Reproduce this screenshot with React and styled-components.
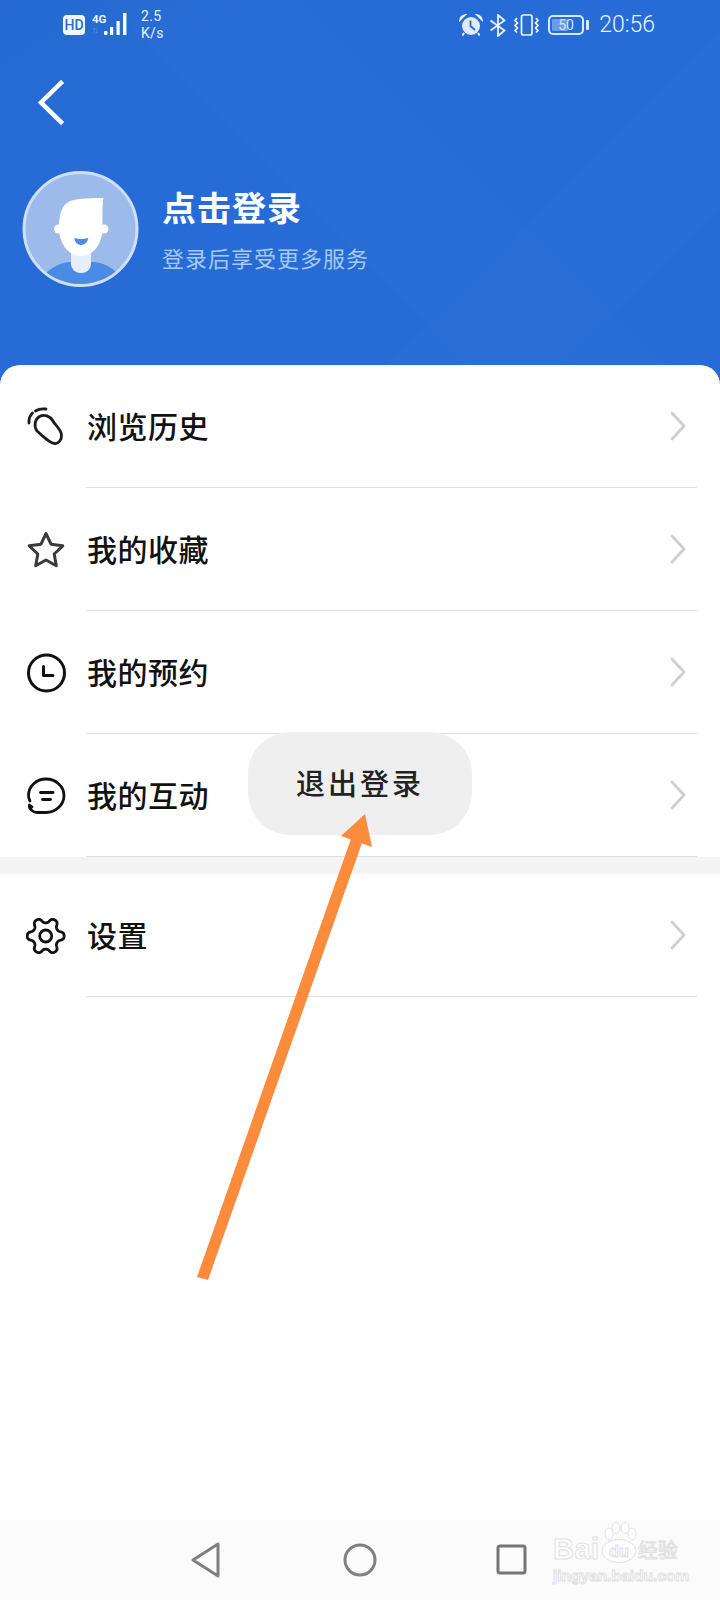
import styled, { createGlobalStyle } from "styled-components";

const GlobalStyle = createGlobalStyle`
  html, body {
    margin: 0;
    padding: 0;
    background: #fff;
  }
`;

const CJK = `"Noto Sans CJK SC", "Noto Sans", sans-serif`;

const menuTop = [
  { label: "浏览历史", icon: <HistoryIcon /> },
  { label: "我的收藏", icon: <StarIcon /> },
  { label: "我的预约", icon: <ClockIcon /> },
  { label: "我的互动", icon: <ChatIcon /> },
];

function gearPath() {
  const pts = [];
  for (let i = 0; i < 180; i++) {
    const a = (i / 180) * Math.PI * 2;
    const wave = Math.tanh(1.5 * Math.cos(6 * a)) / Math.tanh(1.5);
    const r = 15.8 + 2.6 * wave;
    pts.push(`${(22.7 + r * Math.cos(a)).toFixed(2)} ${(22 + r * Math.sin(a)).toFixed(2)}`);
  }
  return `M${pts.join("L")}Z`;
}

function HistoryIcon() {
  return (
    <svg width="44" height="44" viewBox="0 0 44 44" fill="none" stroke="#1c1c1c" strokeWidth="2.8" strokeLinecap="round">
      <path d="M14 26C10.500 21 12 14 16.500 11.500C21.500 9 27 11 30 16C32 20 38 24 38.500 30C39 35 35 39 31.500 38.500C27 38 23 34 14 26Z" />
      <path d="M6 18C5.500 14 7 10.500 9.500 8" />
      <path d="M12.500 6C15.500 4 19 3.500 23 4" />
    </svg>
  );
}

function StarIcon() {
  return (
    <svg width="44" height="44" viewBox="0 0 44 44" fill="none" stroke="#3a3a3a" strokeWidth="3" strokeLinejoin="round">
      <path d="M23 5.500L28 16.200L39.800 17.800L31.200 26L33.300 37.800L23 32L12.700 37.800L14.800 26L6.200 17.800L18 16.200Z" />
    </svg>
  );
}

function ClockIcon() {
  return (
    <svg width="44" height="44" viewBox="0 0 44 44" fill="none" stroke="#111" strokeWidth="3" strokeLinecap="round" strokeLinejoin="round">
      <circle cx="23.500" cy="22" r="18" />
      <path d="M20.500 15.500V24.500H30" />
    </svg>
  );
}

function ChatIcon() {
  return (
    <svg width="44" height="44" viewBox="0 0 44 44" fill="none" stroke="#111" strokeWidth="2.800" strokeLinecap="round" strokeLinejoin="round">
      <path d="M7 27C6 25 5.500 23 5.500 21.500C5.500 12 13.500 5 23 5C32.500 5 41 12 41 21.500C41 31 32.500 38.500 23 38.500H14C9.500 38.500 5.500 34 6.500 31L9 33" />
      <path d="M17.500 18.500H30" />
      <path d="M19.500 25.500H27.500" />
    </svg>
  );
}

function GearIcon() {
  return (
    <svg width="44" height="44" viewBox="0 0 44 44" fill="none" stroke="#111" strokeWidth="2.800">
      <path d={gearPath()} />
      <circle cx="22.700" cy="22" r="6" />
    </svg>
  );
}

const Chevron = () => (
  <svg width="16" height="30" viewBox="0 0 16 30" fill="none" stroke="#cfcfcf" strokeWidth="2.800" strokeLinecap="round" strokeLinejoin="round">
    <path d="M2 2L14 15L2 28" />
  </svg>
);

const BackIcon = () => (
  <svg width="28" height="46" viewBox="0 0 28 46" fill="none" stroke="#fff" strokeWidth="4.500" strokeLinecap="square">
    <path d="M24 3L4 22.500L24 42" />
  </svg>
);

const Avatar = () => (
  <svg width="117" height="117" viewBox="0 0 117 117">
    <defs>
      <clipPath id="avatarClip">
        <circle cx="58.500" cy="58" r="55" />
      </clipPath>
    </defs>
    <circle cx="58.500" cy="58" r="56.500" fill="#9cbaea" stroke="#cfe0f6" strokeWidth="3" />
    <g clipPath="url(#avatarClip)">
      <path d="M20 106C28 97 38 92 47 91H72C82 92 92 97 98 106V120H20Z" fill="#4b8be6" />
      <rect x="49" y="74" width="20" height="28" rx="9" fill="#e6eefb" />
    </g>
    <circle cx="36.500" cy="58" r="4.500" fill="#fff" />
    <circle cx="82" cy="58" r="4.500" fill="#fff" />
    <path d="M37 57C37 42 40 34 48 30C58 27 70 27 81.300 27C80 36 80.500 46 80.500 57C80.500 72 72 85 59 85C46 85 37 72 37 57Z" fill="#fff" />
    <path d="M52.300 67Q59 69 66.300 67Q65 74 59 74Q53.500 74 52.300 67Z" fill="#4b8be6" />
  </svg>
);

const Signal = () => (
  <svg width="25" height="24" viewBox="0 0 25 24" fill="#fff">
    <rect x="0" y="18" width="3.500" height="4" rx="1" />
    <rect x="6" y="14" width="3.200" height="8" />
    <rect x="12.500" y="8" width="3.200" height="14" />
    <rect x="19" y="0" width="3.400" height="22" />
  </svg>
);

const AlarmIcon = () => (
  <svg width="24" height="23" viewBox="0 0 24 23">
    <circle cx="12" cy="12" r="9" fill="#dfeafa" />
    <path d="M1 6C1.500 3 3.500 1.500 6 1ZM23 6C22.500 3 20.500 1.500 18 1Z" fill="#fff" stroke="#fff" strokeWidth="1.500" />
    <path d="M11.500 6.500V12L16 16" fill="none" stroke="#2a6cd6" strokeWidth="1.800" />
    <path d="M5 19L3.500 21.500M19 19L20.500 21.500" stroke="#fff" strokeWidth="1.800" />
  </svg>
);

const BluetoothIcon = () => (
  <svg width="18" height="23" viewBox="0 0 18 23" fill="none" stroke="#eaf2fd" strokeWidth="1.800">
    <path d="M1.500 6.500L15.500 16.500L9 22V1L15.500 6.500L1.500 16.500" />
  </svg>
);

const VibrateIcon = () => (
  <svg width="27" height="22" viewBox="0 0 27 22" fill="none" stroke="#eaf2fd" strokeWidth="1.700">
    <rect x="8.500" y="1" width="10.500" height="20" rx="2" />
    <path d="M4 4L2 6.500L4.500 9L2 11.500L4.500 14L2 16.500L4 18.500" />
    <path d="M23 4L25 6.500L22.500 9L25 11.500L22.500 14L25 16.500L23 18.500" />
  </svg>
);

const Page = styled.div`
  position: relative;
  width: 720px;
  height: 1600px;
  display: flex;
  flex-direction: column;
  overflow: hidden;
  background: #fff;
`;

const Header = styled.header`
  height: 385px;
  flex: none;
  background:
    linear-gradient(135deg, transparent 68%, rgba(255, 255, 255, 0.007) 68%, rgba(255, 255, 255, 0.007) 84%, transparent 84%),
    linear-gradient(45deg, transparent 44%, rgba(255, 255, 255, 0.008) 44%, rgba(255, 255, 255, 0.008) 62%, transparent 62%),
    linear-gradient(152deg, rgba(0, 40, 120, 0.05) 0%, transparent 22%),
    #276cd6;
`;

const StatusBar = styled.div`
  height: 50px;
  display: flex;
  align-items: center;
  justify-content: space-between;
  padding: 0 65px 0 63px;
  color: #eaf2fd;
  font-family: Roboto, "Liberation Sans", sans-serif;
`;

const StatusGroup = styled.div`
  display: flex;
  align-items: center;
`;

const StatusIcon = styled.span`
  display: flex;
  margin-right: ${(p) => p.$gap}px;
`;

const HdBadge = styled.span`
  width: 22px;
  height: 20px;
  border-radius: 4px;
  background: #f2f6fd;
  color: #2a6cd6;
  font-size: 14px;
  font-weight: 500;
  line-height: 20px;
  text-align: center;
  margin-right: 7px;
`;

const NetType = styled.div`
  display: flex;
  flex-direction: column;
  font-size: 11.500px;
  line-height: 12px;
  font-weight: 700;
  width: 13px;
  margin-right: -1px;
  transform: translateY(-1px);
`;

const NetArrows = styled.span`
  color: #6b9fe9;
  font-size: 9px;
  line-height: 10px;
  letter-spacing: -2px;
`;

const Speed = styled.div`
  display: flex;
  flex-direction: column;
  font-size: 14px;
  line-height: 17px;
  margin-left: 12px;
  letter-spacing: 0.3px;
`;

const Battery = styled.div`
  position: relative;
  width: 36px;
  height: 20px;
  border: 2px solid #dbe8fa;
  border-radius: 5px;
  box-sizing: border-box;
  margin: 0 2px 0 8px;
  padding: 2px;
  color: #d5e3fa;
  font-size: 14px;
  line-height: 12px;
  text-align: center;
`;

const BatteryLevel = styled.div`
  position: absolute;
  left: 2px;
  top: 2px;
  bottom: 2px;
  background: #6a9de6;
  border-radius: 1px;
`;

const BatteryText = styled.span`
  position: relative;
`;

const BatteryTip = styled.span`
  width: 3px;
  height: 10px;
  border-radius: 1px;
  background: #dbe8fa;
  margin-right: 10px;
`;

const Clock = styled.span`
  font-size: 23px;
  font-weight: 300;
  line-height: 26px;
`;

const BackButton = styled.div`
  height: 46px;
  padding: 30px 0 0 37px;
  line-height: 0;
`;

const Profile = styled.div`
  display: flex;
  align-items: center;
  margin-top: 45px;
  padding-left: 22px;
`;

const ProfileText = styled.div`
  margin-left: 23px;
  padding-bottom: 1px;
  display: flex;
  flex-direction: column;
  font-family: ${CJK};
`;

const Title = styled.div`
  color: #fff;
  font-size: 34px;
  font-weight: 700;
  line-height: 40px;
  letter-spacing: 1px;
`;

const Subtitle = styled.div`
  color: #a9c9f2;
  font-size: 22px;
  line-height: 30px;
  margin-top: 15px;
  letter-spacing: 1px;
`;

const Card = styled.main`
  margin-top: -20px;
  flex: 1;
  background: #fff;
  border-radius: 20px 20px 0 0;
  display: flex;
  flex-direction: column;
`;

const Row = styled.div`
  height: 123px;
  display: flex;
  align-items: center;
`;

const IconCell = styled.div`
  width: 86px;
  box-sizing: border-box;
  padding-left: 23px;
  line-height: 0;
`;

const RowBody = styled.div`
  flex: 1;
  height: 100%;
  box-sizing: border-box;
  margin-right: 23px;
  padding: 0 11px 0 1px;
  border-bottom: 1px solid #dfdfdf;
  display: flex;
  align-items: center;
  justify-content: space-between;
`;

const Label = styled.span`
  font-family: ${CJK};
  font-size: 30px;
  font-weight: 500;
  color: #111;
  line-height: 40px;
  letter-spacing: 0.5px;
  margin-bottom: 3px;
`;

const Band = styled.div`
  height: 17px;
  background: #f4f4f4;
`;

const Spacer = styled.div`
  flex: 1;
`;

const NavBar = styled.nav`
  height: 80px;
  background: #fbfbfb;
  display: flex;
  align-items: center;
  padding: 0 0 0 190px;
`;

const NavIcon = styled.svg`
  margin-right: ${(p) => p.$gap}px;
  flex: none;
`;

const Watermark = styled.div`
  position: absolute;
  left: 553px;
  top: 1522px;
  width: 130px;
  color: #fff;
  -webkit-text-stroke: 1px #e0e0e0;
  font-family: "Liberation Sans", sans-serif;
`;

const MarkTop = styled.div`
  display: flex;
  align-items: flex-end;
  height: 42px;
`;

const MarkWord = styled.span`
  font-size: 29px;
  font-weight: 700;
  line-height: 30px;
  letter-spacing: 0.5px;
`;

const MarkCjk = styled.span`
  font-family: ${CJK};
  font-size: 20px;
  line-height: 28px;
  white-space: nowrap;
`;

const MarkUrl = styled.div`
  font-size: 15.500px;
  font-weight: 700;
  line-height: 18px;
  margin-top: 3px;
  white-space: nowrap;
`;

const Toast = styled.div`
  position: absolute;
  left: 248px;
  top: 732px;
  width: 224px;
  height: 103px;
  box-sizing: border-box;
  padding-bottom: 3px;
  border-radius: 42px;
  background: #efefef;
  display: flex;
  align-items: center;
  justify-content: center;
  font-family: ${CJK};
  font-size: 29px;
  font-weight: 500;
  letter-spacing: 3px;
  color: #222;
`;

const Arrow = styled.svg`
  position: absolute;
  left: 190px;
  top: 805px;
`;

export default function App() {
  return (
    <Page>
      <GlobalStyle />
      <Header>
        <StatusBar>
          <StatusGroup>
            <HdBadge>HD</HdBadge>
            <NetType>
              4G
              <NetArrows>↑↓</NetArrows>
            </NetType>
            <Signal />
            <Speed>
              <span>2.5</span>
              <span>K/s</span>
            </Speed>
          </StatusGroup>
          <StatusGroup>
            <StatusIcon $gap={6}>
              <AlarmIcon />
            </StatusIcon>
            <StatusIcon $gap={6}>
              <BluetoothIcon />
            </StatusIcon>
            <StatusIcon $gap={0}>
              <VibrateIcon />
            </StatusIcon>
            <Battery>
              <BatteryLevel style={{ width: "50%" }} />
              <BatteryText>50</BatteryText>
            </Battery>
            <BatteryTip />
            <Clock>20:56</Clock>
          </StatusGroup>
        </StatusBar>
        <BackButton>
          <BackIcon />
        </BackButton>
        <Profile>
          <Avatar />
          <ProfileText>
            <Title>点击登录</Title>
            <Subtitle>登录后享受更多服务</Subtitle>
          </ProfileText>
        </Profile>
      </Header>
      <Card>
        {menuTop.map((item) => (
          <Row key={item.label}>
            <IconCell>{item.icon}</IconCell>
            <RowBody>
              <Label>{item.label}</Label>
              <Chevron />
            </RowBody>
          </Row>
        ))}
        <Band />
        <Row>
          <IconCell>
            <GearIcon />
          </IconCell>
          <RowBody>
            <Label>设置</Label>
            <Chevron />
          </RowBody>
        </Row>
        <Spacer />
        <NavBar>
          <NavIcon $gap={121} width="32" height="38" viewBox="0 0 32 38" fill="none" stroke="#808080" strokeWidth="3" strokeLinejoin="round">
            <path d="M28 3V35L3 19Z" />
          </NavIcon>
          <NavIcon $gap={119} width="34" height="34" viewBox="0 0 34 34" fill="none" stroke="#808080" strokeWidth="3">
            <circle cx="17" cy="17" r="15" />
          </NavIcon>
          <NavIcon $gap={0} width="32" height="32" viewBox="0 0 32 32" fill="none" stroke="#757575" strokeWidth="3" strokeLinejoin="round">
            <rect x="2" y="2" width="27" height="27" rx="2" />
          </NavIcon>
        </NavBar>
      </Card>
      <Toast>退出登录</Toast>
      <Arrow width="190" height="480" viewBox="190 805 190 480">
        <polygon points="197,1277 208,1280 363,840 352,836" fill="#fd8b3c" />
        <polygon points="365,814 341,836 372,847" fill="#fd8b3c" />
      </Arrow>
      <Watermark>
        <MarkTop>
          <MarkWord>Bai</MarkWord>
          <svg width="38" height="42" viewBox="0 0 38 42" fill="#fff" stroke="#e0e0e0" strokeWidth="1">
            <ellipse cx="9" cy="12" rx="4" ry="6" />
            <ellipse cx="16" cy="6" rx="4" ry="5.500" />
            <ellipse cx="25" cy="6" rx="4" ry="5.500" />
            <ellipse cx="32" cy="12" rx="4" ry="6" />
            <ellipse cx="19" cy="29" rx="17" ry="11.500" />
            <text x="19" y="35" fontSize="16" fontWeight="700" textAnchor="middle" fontFamily="Liberation Sans, sans-serif">du</text>
          </svg>
          <MarkCjk>经验</MarkCjk>
        </MarkTop>
        <MarkUrl>jingyan.baidu.com</MarkUrl>
      </Watermark>
    </Page>
  );
}
